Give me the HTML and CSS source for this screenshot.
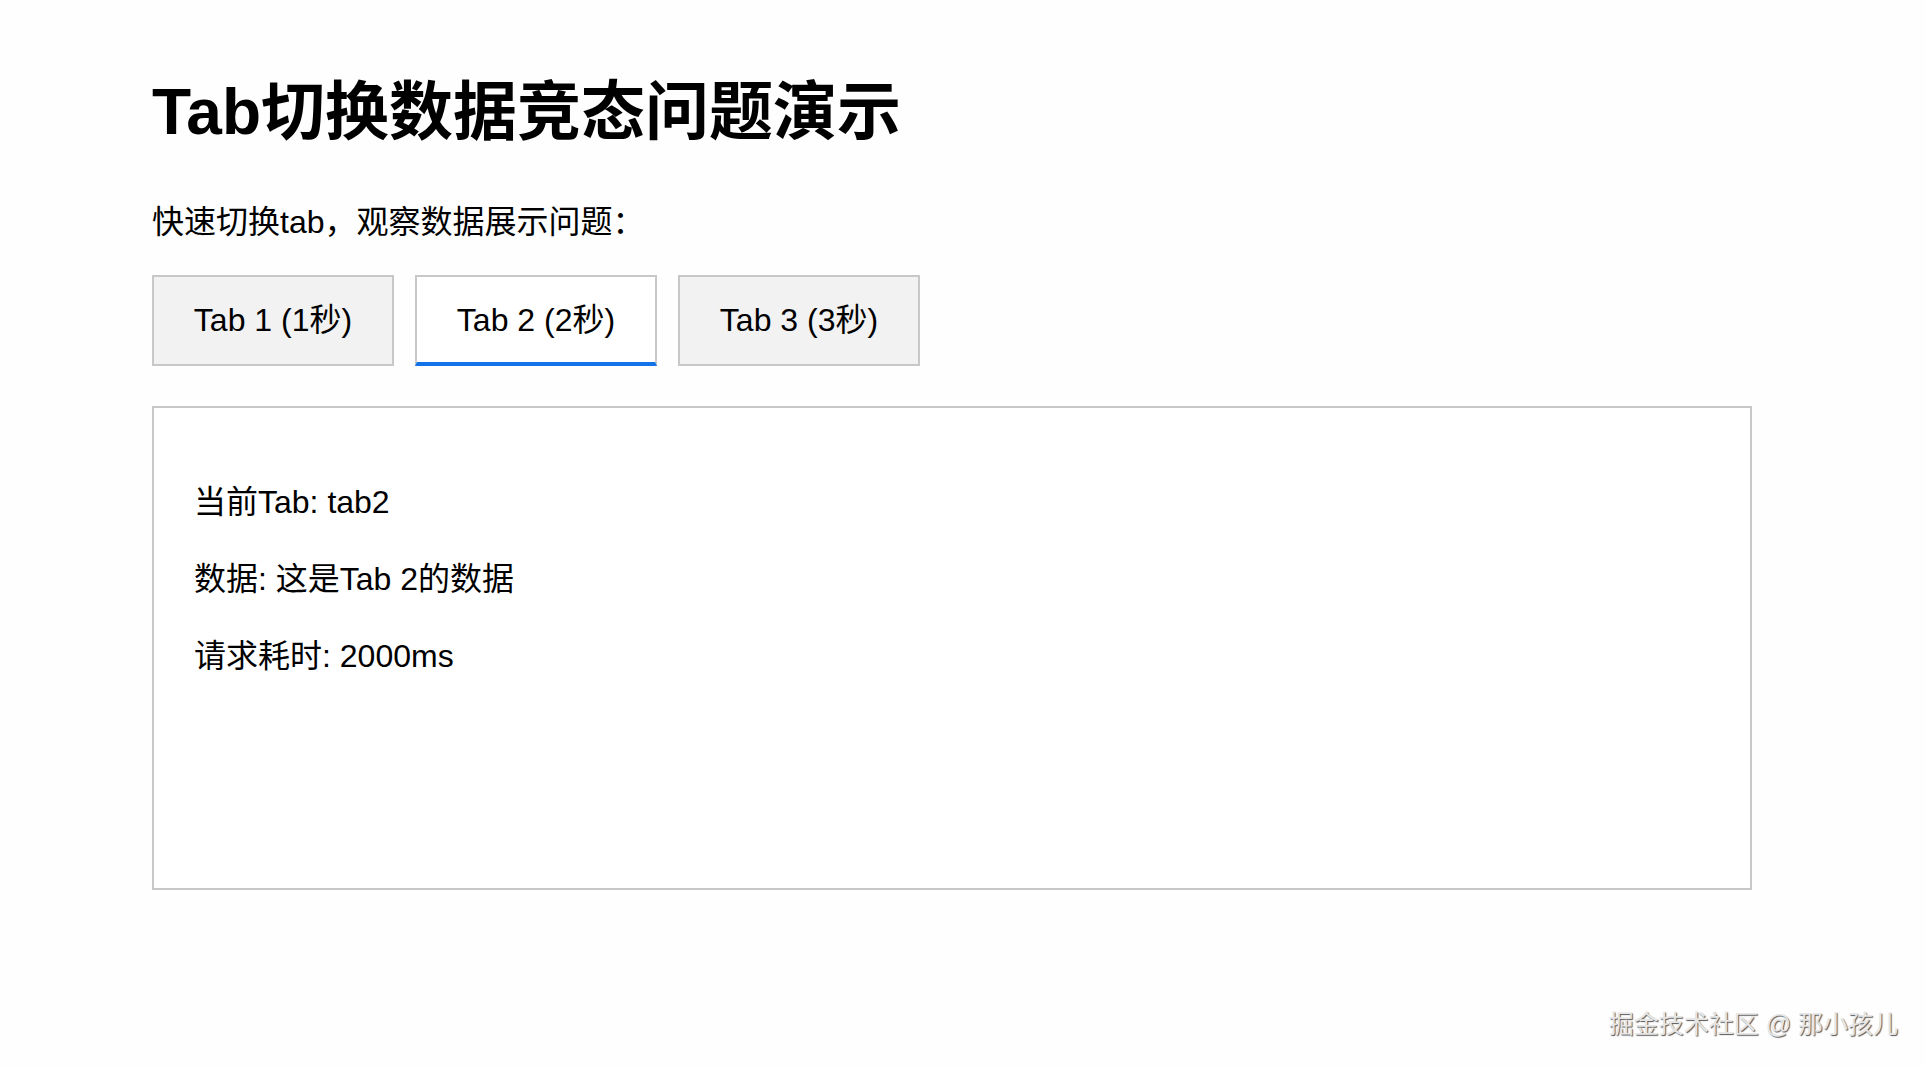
FILE: index.html
```html
<!DOCTYPE html>
<html lang="zh-CN">
<head>
<meta charset="utf-8">
<title>Tab切换数据竞态问题演示</title>
<link rel="stylesheet" href="styles.css">
</head>
<body>
<div class="page">
  <h1 class="title">Tab切换数据竞态问题演示</h1>
  <p class="subtitle">快速切换tab，观察数据展示问题：</p>
  <div class="tabs">
    <button class="tab">Tab 1 (1秒)</button>
    <button class="tab tab-active">Tab 2 (2秒)</button>
    <button class="tab">Tab 3 (3秒)</button>
  </div>
  <div class="panel">
    <p class="line">当前Tab: tab2</p>
    <p class="line">数据: 这是Tab 2的数据</p>
    <p class="line">请求耗时: 2000ms</p>
  </div>
</div>
<div class="watermark">掘金技术社区 @ 那小孩儿</div>
</body>
</html>
```

FILE: styles.css
```css
html, body {
  margin: 0;
  padding: 0;
  background: #fefefe;
}
body {
  font-family: "Liberation Sans", "Noto Sans CJK SC", sans-serif;
  color: #000;
  width: 1926px;
  height: 1066px;
  position: relative;
  overflow: hidden;
}
.page {
  padding: 22px 0 0 152px;
  width: 1600px;
}
.title {
  font-size: 64px;
  font-weight: bold;
  line-height: 90px;
  margin: 45px 0 43px;
}
.subtitle {
  font-size: 32px;
  line-height: 45px;
  margin: 0 0 30px;
}
.tabs {
  display: flex;
  gap: 21px;
}
.tab {
  box-sizing: border-box;
  width: 242px;
  height: 91px;
  padding: 0 0 7px;
  border: 2px solid #c8c8c8;
  background: #f2f2f2;
  font-family: "Liberation Sans", "Noto Sans CJK SC", sans-serif;
  font-size: 32px;
  color: #000;
}
.tab-active {
  background: #fff;
  border-bottom: 4px solid #1473ea;
  padding-bottom: 5px;
}
.panel {
  margin-top: 40px;
  border: 2px solid #c8c8c8;
  padding: 40px;
  min-height: 400px;
  background: #fff;
}
.line {
  font-size: 32px;
  line-height: 45px;
  margin: 32px 0;
}
.watermark {
  position: absolute;
  right: 28px;
  bottom: 27px;
  font-size: 25px;
  line-height: 30px;
  color: #e6e6e6;
  text-shadow: 1px 1px 1px #555;
}
```
